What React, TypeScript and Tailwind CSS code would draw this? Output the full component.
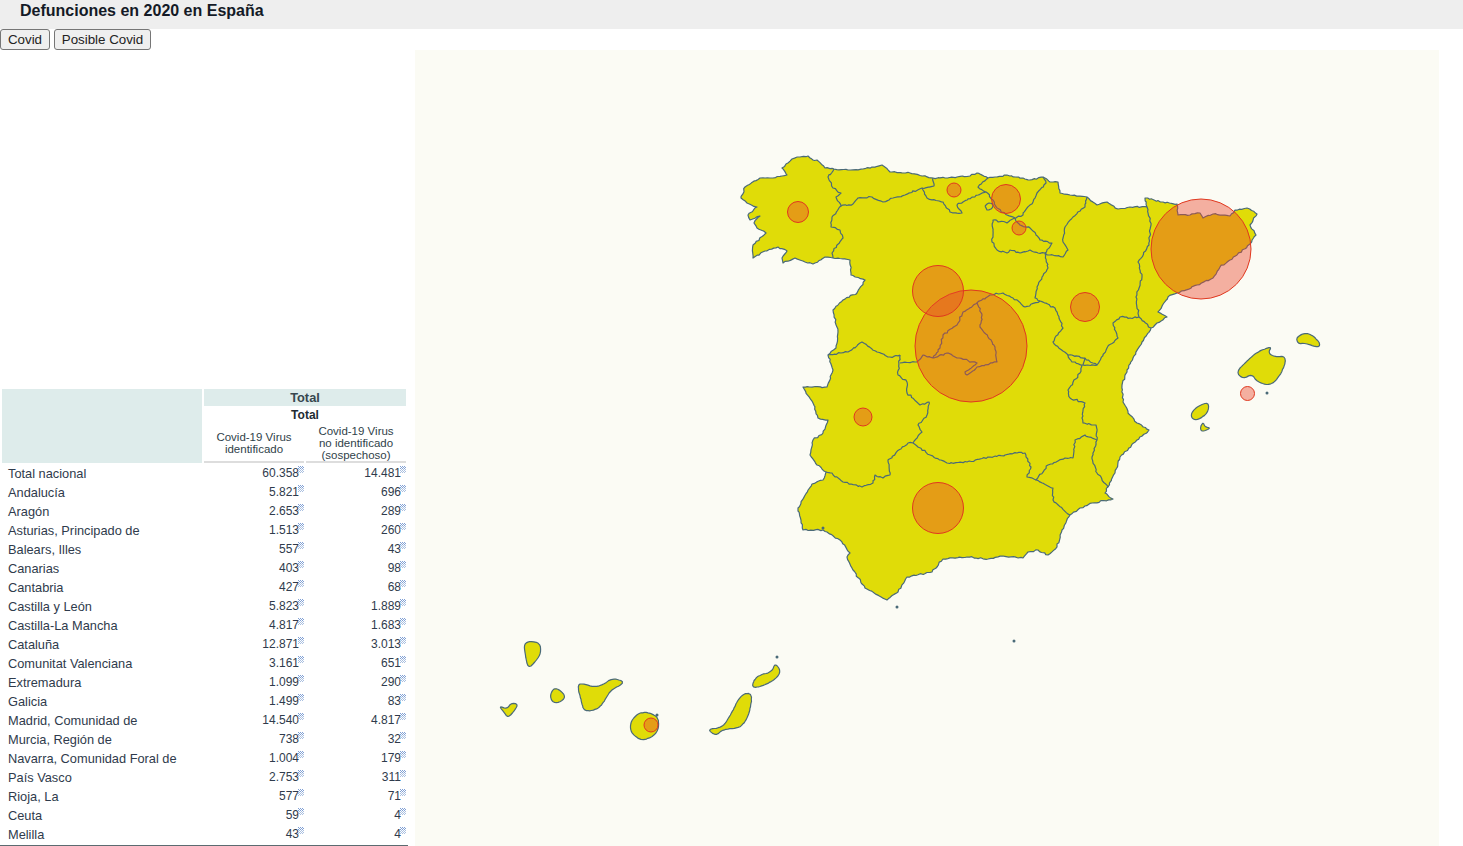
import React from "react";

type P = number[];

function rough(points: P, seed: number, amp: number, step = 3.2): string {
  let s = seed * 9301 + 49297;
  const rnd = () => {
    s = (s * 9301 + 49297) % 233280;
    return s / 233280 - 0.5;
  };
  const out: string[] = [];
  const n = points.length / 2;
  for (let i = 0; i < n - 1; i++) {
    const x0 = points[2 * i], y0 = points[2 * i + 1];
    const x1 = points[2 * i + 2], y1 = points[2 * i + 3];
    const len = Math.hypot(x1 - x0, y1 - y0);
    const k = Math.max(1, Math.round(len / step));
    for (let j = 0; j < k; j++) {
      const t = j / k;
      const a = j === 0 ? 0 : amp;
      const px = x0 + (x1 - x0) * t + rnd() * 2 * a;
      const py = y0 + (y1 - y0) * t + rnd() * 2 * a;
      out.push(`${out.length ? "L" : "M"}${px.toFixed(1)} ${py.toFixed(1)}`);
    }
  }
  out.push(`L${points[2 * n - 2]} ${points[2 * n - 1]}`);
  return out.join("");
}

function smooth(p: P): P {
  const out: P = [];
  const n = p.length / 2 - 1;
  for (let i = 0; i < n; i++) {
    const x0 = p[2 * i], y0 = p[2 * i + 1], x1 = p[2 * i + 2], y1 = p[2 * i + 3];
    out.push(x0 * 0.75 + x1 * 0.25, y0 * 0.75 + y1 * 0.25, x0 * 0.25 + x1 * 0.75, y0 * 0.25 + y1 * 0.75);
  }
  out.push(out[0], out[1]);
  return out;
}

const coast: P = [782,168,786,164,792,159,800,157,808,156,813,160,817,160,825,168,834,169,848,170,863,169,872,167,882,165,890,172,910,173,922,176,933,178,945,178,957,177,970,176,977,173,988,178,995,177,1007,175,1023,178,1030,180,1043,177,1050,182,1058,182,1060,193,1070,195,1087,197,1097,205,1107,202,1118,209,1130,207,1147,207,1145,198,1163,202,1177,204,1178,215,1190,215,1200,213,1203,218,1213,214,1230,216,1235,210,1247,208,1257,214,1250,225,1256,235,1250,244,1237,255,1220,267,1213,278,1197,285,1177,293,1168,297,1158,312,1167,317,1155,325,1151,328,1142,342,1133,358,1127,370,1122,385,1123,402,1130,415,1137,423,1149,430,1137,440,1120,457,1115,473,1108,487,1105,493,1113,499,1092,503,1080,508,1070,515,1062,530,1057,547,1048,555,1038,550,1028,552,1023,558,1003,556,988,559,967,557,943,559,932,572,907,577,898,592,887,600,865,588,853,570,847,557,850,553,840,540,823,530,803,530,798,508,812,484,823,480,826,472,817,465,810,455,813,440,823,433,828,420,818,418,813,403,803,387,827,387,833,370,828,355,836,348,838,332,833,310,843,300,857,293,865,280,851,275,850,260,833,258,825,257,813,264,805,262,795,258,783,263,782,258,787,251,778,247,765,251,753,258,753,245,766,233,757,228,754,223,760,216,750,220,748,215,757,207,747,203,741,198,745,187,760,178,773,178,787,175,782,168];

const borders: P[] = [
  [834,169,828,177,833,188,841,193,836,197,841,206,832,217,831,227,840,230,843,238,832,253,833,258],
  [841,206,853,204,858,198,872,197,883,202,893,198,905,195,922,188,934,186,933,178],
  [922,188,927,198,943,202,950,212,962,213,957,205,963,202,978,195,986,192,978,187,988,178],
  [986,192,993,200,997,208,1007,215,1015,218,1023,215,1027,208,1033,202,1037,193,1046,183,1043,177],
  [985,206,989,203,993,205,991,209,987,210,985,206],
  [1015,218,1007,223,993,220,992,242,997,250,1007,253,1010,250,1020,253,1030,250,1038,253,1045,253],
  [1015,218,1020,225,1030,228,1033,231,1040,240,1052,243,1045,253],
  [1087,197,1085,207,1073,217,1065,227,1063,242,1068,250,1063,257,1050,255,1045,253],
  [1045,253,1048,268,1042,277,1037,287,1035,298,1040,301,1055,308,1063,328,1053,342,1068,355,1085,358,1097,365,1107,348,1118,338,1113,323,1120,317,1130,318,1139,317],
  [1147,207,1151,225,1149,245,1138,262,1142,277,1136,297,1139,317,1151,328],
  [1068,355,1072,362,1083,365,1085,358],
  [1083,365,1097,365],
  [1082,365,1080,373,1068,390,1070,398,1085,403,1082,418,1083,423,1096,425,1097,440,1092,457,1097,473,1108,487],
  [1097,440,1085,435,1075,440,1073,458,1065,458,1048,465,1036,480,1053,488,1053,500,1070,515],
  [1036,480,1027,477,1031,467,1025,453,1017,453,990,457,967,462,947,463,930,455,913,443],
  [826,472,832,473,843,482,862,487,873,483,875,475,883,478,890,475,888,460,908,443,913,443],
  [913,443,922,432,918,425,927,415,929,402,920,405,907,393,907,382,898,375,900,355],
  [828,355,848,352,862,342,877,352,890,357,900,355],
  [900,363,915,362,917,362],
  [917,362,923,355,933,358,940,348,943,335,957,325,963,312,977,303,982,315,980,327,988,337,995,347,997,362,977,367,967,375,965,372,975,365,977,363,957,358,947,353,933,358],
  [977,303,990,295,1003,293,1013,298,1025,307,1040,301],
];

const islands: P[] = [
  [524,644,530,641,540,643,541,653,536,661,528,669,525,653,524,644],
  [499,706,507,709,511,703,518,704,515,710,508,718,504,712,499,706],
  [550,695,554,688,560,690,566,697,559,703,552,702,550,695],
  [577,684,585,684,593,687,603,685,612,678,626,682,611,690,606,698,599,709,584,712,581,700,577,684],
  [632,719,642,711,658,716,659,728,654,736,642,741,632,734,630,727,632,719],
  [707,729,722,728,730,716,741,694,753,693,749,715,741,728,723,729,716,736,707,729],
  [751,688,756,676,772,672,775,663,781,671,776,679,763,686,751,688],
  [1236,372,1247,361,1257,352,1272,346,1268,353,1275,357,1286,356,1284,369,1272,386,1257,382,1252,374,1243,379,1236,372],
  [1296,337,1308,332,1320,342,1319,348,1305,343,1298,344,1296,337],
  [1191,413,1198,406,1209,402,1208,413,1198,420,1192,419,1191,413],
  [1200,428,1203,422,1205,427,1211,428,1202,432,1200,428],
];

const dots: P = [657,715,777,657,1267,393,1014,641,897,607,823,528];

const circles: P[] = [
  [971,346,56],[1201,249,50],[938,291,25.5],[938,508,25.5],[1085,307,14.5],[1006,199,14.5],
  [798,212,10.5],[863,417,9],[954,190,7],[1019,228,7],[651,725,7],[1247.5,393.5,7],
];

const rows: [string, string, string][] = [
  ["Total nacional","60.358","14.481"],["Andalucía","5.821","696"],["Aragón","2.653","289"],
  ["Asturias, Principado de","1.513","260"],["Balears, Illes","557","43"],["Canarias","403","98"],
  ["Cantabria","427","68"],["Castilla y León","5.823","1.889"],["Castilla-La Mancha","4.817","1.683"],
  ["Cataluña","12.871","3.013"],["Comunitat Valenciana","3.161","651"],["Extremadura","1.099","290"],
  ["Galicia","1.499","83"],["Madrid, Comunidad de","14.540","4.817"],["Murcia, Región de","738","32"],
  ["Navarra, Comunidad Foral de","1.004","179"],["País Vasco","2.753","311"],["Rioja, La","577","71"],
  ["Ceuta","59","4"],["Melilla","43","4"],
];

function Note() {
  const cells: React.ReactNode[] = [];
  for (let y = 0; y < 7; y++)
    for (let x = 0; x < 6; x++)
      if ((x + y) % 2 === 0)
        cells.push(<rect key={`${x}-${y}`} x={x} y={y} width="1" height="1" fill={y < 3 ? "#7f9fd4" : "#a9bfe0"} />);
  return (
    <svg width="6" height="7" viewBox="0 0 6 7" className="shrink-0 mt-[2px] -ml-[1px]">
      {cells}
    </svg>
  );
}

function Num({ v }: { v: string }) {
  return (
    <td className="p-0 h-[19px] text-[12px] leading-[19px] text-[#2f3b4c]">
      <div className="flex justify-end items-start h-[19px]">
        <span>{v}</span>
        <Note />
      </div>
    </td>
  );
}

export default function App() {
  return (
    <div className="h-[846px] w-[1463px] overflow-hidden bg-white font-['Liberation_Sans',Arial,sans-serif] text-[#1f2a33]">
      <header className="h-[29px] bg-[#eeeeee] pl-[20px] text-[16px] font-bold leading-[21px] text-[#141a26]">
        Defunciones en 2020 en España
      </header>
      <div className="flex h-[21px] items-start gap-[4px]">
        <button className="h-[21px] w-[50px] rounded-[3px] border border-[#767676] bg-[#efefef] text-[13.33px] leading-[15px] text-[#222]">
          Covid
        </button>
        <button className="h-[21px] w-[97px] rounded-[3px] border border-[#767676] bg-[#efefef] text-[13.33px] leading-[15px] text-[#222]">
          Posible Covid
        </button>
      </div>
      <main className="flex h-[796px]">
        <section className="w-[415px] shrink-0 pt-[339px]">
          <div className="w-[408px] border-b border-[#5b6b70] pb-[1px]">
            <table className="w-[408px] table-fixed border-separate [border-spacing:2px_0]">
              <colgroup>
                <col className="w-[200px]" />
                <col className="w-[100px]" />
                <col className="w-[100px]" />
              </colgroup>
              <thead>
                <tr>
                  <th rowSpan={3} className="bg-[#deeceb] p-0 h-[74px]"></th>
                  <th colSpan={2} className="h-[17px] bg-[#deeceb] p-0 text-center text-[12.8px] font-bold leading-[17px] text-[#37474f]">
                    Total
                  </th>
                </tr>
                <tr>
                  <th colSpan={2} className="h-[17px] p-0 pt-[1px] text-center text-[12px] font-bold leading-[16px] text-[#222b33]">
                    Total
                  </th>
                </tr>
                <tr>
                  <th className="h-[40px] border-b-2 border-[#dddddd] p-0 pt-[2px] text-center align-middle text-[11.5px] font-normal leading-[12px] text-[#2f3f4a]">
                    Covid-19 Virus
                    <br />
                    identificado
                  </th>
                  <th className="h-[40px] border-b-2 border-[#dddddd] p-0 pt-[2px] text-center align-middle text-[11.5px] font-normal leading-[12px] text-[#2f3f4a]">
                    Covid-19 Virus
                    <br />
                    no identificado
                    <br />
                    (sospechoso)
                  </th>
                </tr>
              </thead>
              <tbody>
                <tr>
                  <td colSpan={3} className="h-[1px] p-0"></td>
                </tr>
                {rows.map((r) => (
                  <tr key={r[0]}>
                    <td className="h-[19px] p-0 pl-[6px] text-[12.8px] leading-[19px] text-[#2f3b4c] whitespace-nowrap">{r[0]}</td>
                    <Num v={r[1]} />
                    <Num v={r[2]} />
                  </tr>
                ))}
              </tbody>
            </table>
          </div>
        </section>
        <section className="h-[796px] w-[1024px] shrink-0 bg-[#fbfbf4]">
          <svg width="1024" height="796" viewBox="415 50 1024 796" className="block">
            <g fill="#e0dc08" stroke="#4a6a78" strokeWidth="1.2" strokeLinejoin="round">
              <path d={rough(coast, 1, 0.7, 2.4) + "Z"} />
              {islands.map((p, i) => (
                <path key={i} d={rough(smooth(smooth(p)), 40 + i, 0.25, 2) + "Z"} />
              ))}
            </g>
            <g fill="none" stroke="#4a6a78" strokeWidth="1.2" strokeLinejoin="round">
              {borders.map((p, i) => (
                <path key={i} d={rough(p, 10 + i, 0.8, 2.2)} />
              ))}
            </g>
            <g fill="#4a6a78">
              {dots.reduce<React.ReactNode[]>((acc, _, i) => {
                if (i % 2 === 0) acc.push(<circle key={i} cx={dots[i]} cy={dots[i + 1]} r="1.5" />);
                return acc;
              }, [])}
            </g>
            <g>
              {circles.map((c, i) => (
                <circle key={i} cx={c[0]} cy={c[1]} r={c[2]} fill="#e9452b" fillOpacity="0.42" stroke="#e0381f" strokeWidth="1" />
              ))}
            </g>
          </svg>
        </section>
      </main>
    </div>
  );
}
